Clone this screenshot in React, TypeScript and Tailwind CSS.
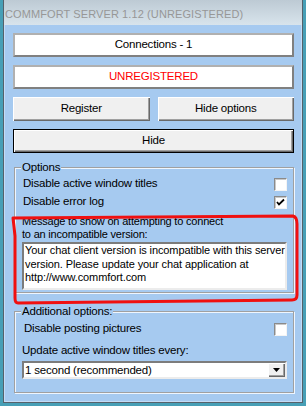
import React from "react";

const btn =
  "bg-[#f0f0f0] flex items-center justify-center shadow-[inset_1px_1px_0_#ffffff,inset_-1px_-1px_0_#696969,inset_-2px_-2px_0_#a0a0a0]";

function CheckBox({ checked }: { checked?: boolean }) {
  return (
    <div className="w-[13px] h-[13px] bg-white border border-t-[#8a8a8a] border-l-[#8a8a8a] border-r-[#f4f4f4] border-b-[#f4f4f4] shadow-[inset_1px_1px_0_#c8c8c8] flex items-center justify-center">
      {checked && (
        <svg width="9" height="9" viewBox="0 0 9 9">
          <path d="M1 4 L3 6.5 L8 1.5" stroke="#000" strokeWidth="1.8" fill="none" />
        </svg>
      )}
    </div>
  );
}

function GroupBox({ label, className, children }: { label: string; className?: string; children: React.ReactNode }) {
  return (
    <div className={`relative ml-[1px] border border-[#a0a0a0] shadow-[inset_1px_1px_0_#eef6ff,1px_1px_0_#eef6ff] ${className ?? ""}`}>
      <span className="absolute -top-[8px] left-[6px] bg-[#a6caf0] px-[1px] leading-[14px]">{label}</span>
      {children}
    </div>
  );
}

export default function App() {
  return (
    <div className="relative w-[306px] h-[406px] bg-[#479fb6] px-[3px] pb-[3px] font-['Liberation_Sans',Arial,sans-serif] text-[11.5px] tracking-[-0.2px] text-black">
      <div className="h-full flex flex-col border-x border-b border-[#56616b]">
        <div className="h-[25px] shrink-0 bg-gradient-to-b from-[#bdcad4] to-[#d8e4ec] pl-[1px] pt-[3px] flex items-center text-[#979797] text-[11px] tracking-[0.1px]">
          COMMFORT SERVER 1.12 (UNREGISTERED)
        </div>
        <div className="flex-1 bg-[#a6caf0] border-x border-b border-[#c4dcf5] pl-[8px] pr-[7px] pt-[8px] flex flex-col">
          <div className="h-[24px] bg-white border-2 border-t-[#b0b0b0] border-l-[#b0b0b0] border-r-[#808080] border-b-[#808080] flex items-center justify-center">
            Connections - 1
          </div>
          <div className="mt-[8px] h-[24px] bg-white border-2 border-t-[#b0b0b0] border-l-[#b0b0b0] border-r-[#808080] border-b-[#808080] flex items-center justify-center text-[#ff0000]">
            UNREGISTERED
          </div>
          <div className="mt-[8px] grid grid-cols-2 gap-[8px]">
            <div className={`${btn} h-[24px]`}>Register</div>
            <div className={`${btn} h-[24px]`}>Hide options</div>
          </div>
          <div className="mt-[8px] h-[24px] border border-black">
            <div className={`${btn} h-full`}>Hide</div>
          </div>

          <GroupBox label="Options" className="mt-[14px] pt-[8px] pb-[2px]">
            <div className="h-[16px] pl-[8px] pr-[6px] flex items-center justify-between">
              <span>Disable active window titles</span>
              <CheckBox />
            </div>
            <div className="mt-[2px] h-[16px] pl-[8px] pr-[6px] flex items-center justify-between">
              <span>Disable error log</span>
              <CheckBox checked />
            </div>
            <div className="mt-[5px] pl-[7px] leading-[13px] text-[11px]">
              Message to show on attempting to connect
              <br />
              to an incompatible version:
            </div>
            <div className="mt-[1px] ml-[7px] mr-[6px] h-[48px] bg-white border-2 border-t-[#7c7c7c] border-l-[#7c7c7c] border-r-[#ececec] border-b-[#ececec] pl-[1px] leading-[13.5px] text-[11px] tracking-[-0.1px] whitespace-nowrap overflow-hidden">
              Your chat client version is incompatible with this server
              <br />
              version. Please update your chat application at
              <br />
              http://www.commfort.com
            </div>
          </GroupBox>

          <GroupBox label="Additional options:" className="mt-[18px] pt-[9px] pb-[13px]">
            <div className="h-[16px] pl-[9px] pr-[6px] flex items-center justify-between">
              <span>Disable posting pictures</span>
              <CheckBox />
            </div>
            <div className="mt-[6px] pl-[7px] leading-[15px]">Update active window titles every:</div>
            <div className="mt-[3px] ml-[7px] mr-[6px] h-[18px] bg-white border-2 border-t-[#7c7c7c] border-l-[#7c7c7c] border-r-[#ececec] border-b-[#ececec] flex items-center">
              <span className="flex-1 pl-[1px] leading-[14px]">1 second (recommended)</span>
              <div className={`${btn} w-[17px] h-full`}>
                <svg width="7" height="4" viewBox="0 0 7 4">
                  <path d="M0 0 H7 L3.5 4 Z" fill="#000" />
                </svg>
              </div>
            </div>
          </GroupBox>
        </div>
      </div>

      <svg className="absolute inset-0 pointer-events-none" width="306" height="406" viewBox="0 0 306 406">
        <path
          d="M13 218 L293 216 Q297 217 297 224 L297 295 Q297 300 292 300 L18 303 Q15 303 15 298 L15 236 Q14 226 13 218"
          stroke="#f01010"
          strokeWidth="3"
          fill="none"
          strokeLinejoin="round"
          strokeLinecap="round"
        />
      </svg>
    </div>
  );
}
